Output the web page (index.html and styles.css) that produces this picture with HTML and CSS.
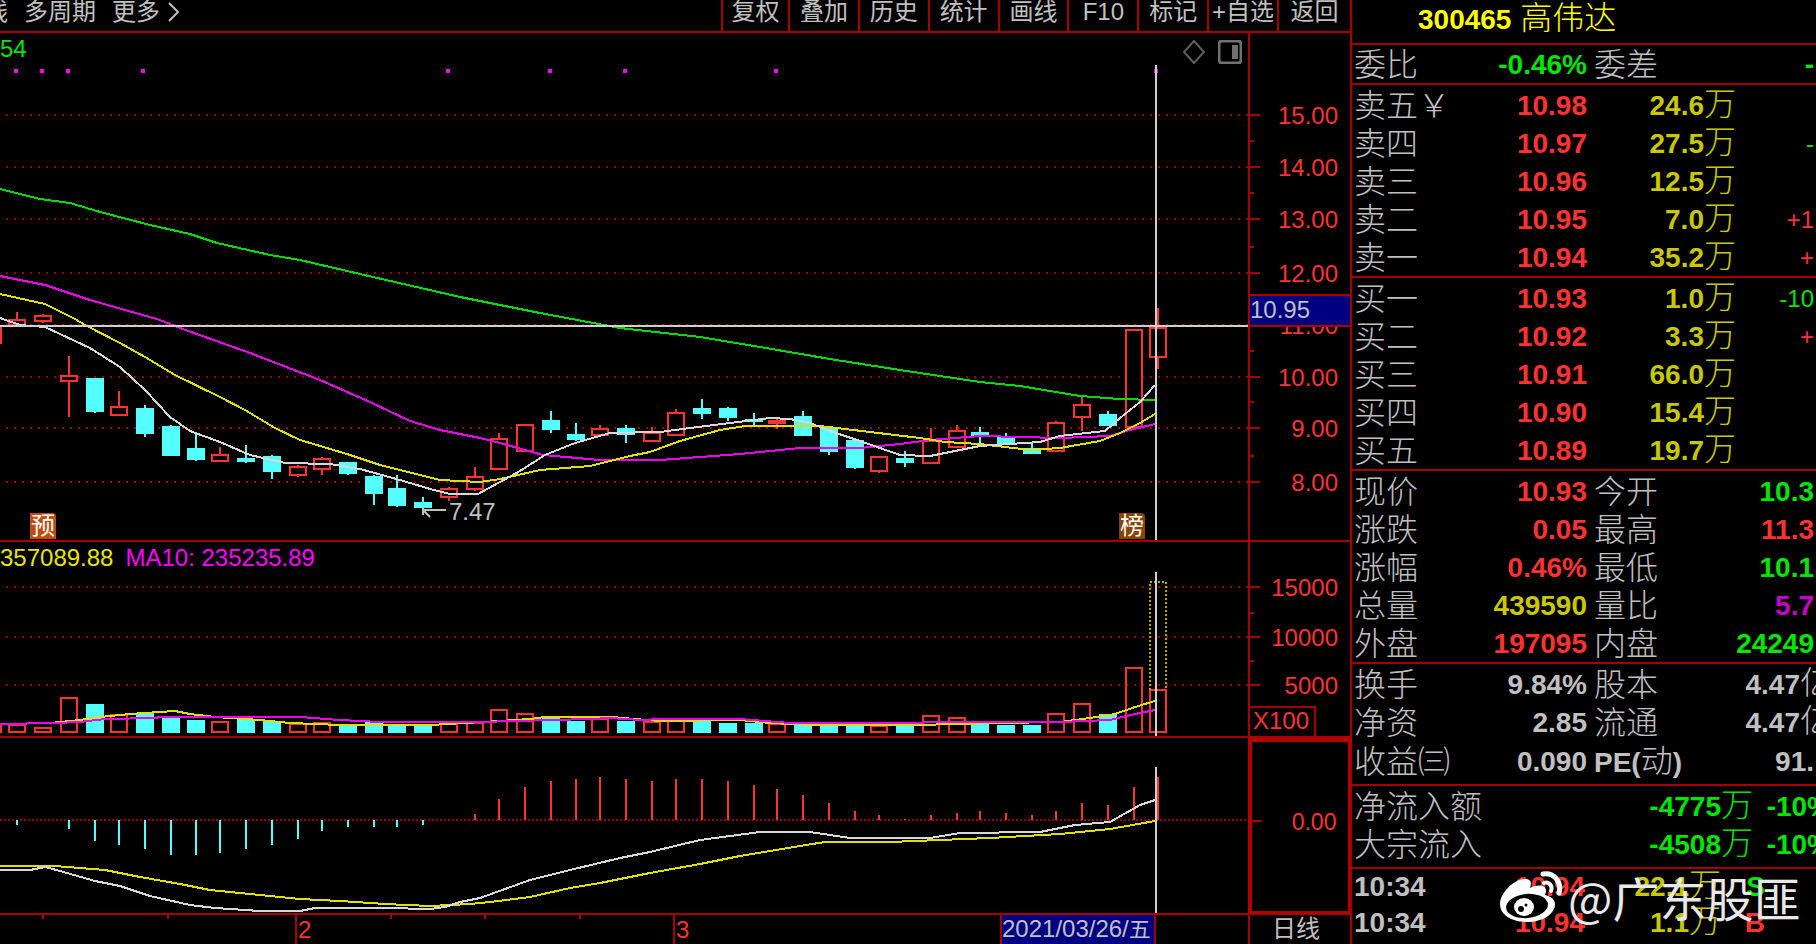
FILE: index.html
```html
<!DOCTYPE html>
<html lang="zh-CN">
<head>
<meta charset="utf-8">
<title>300465 高伟达</title>
<link rel="stylesheet" href="styles.css">
</head>
<body>
<div class="terminal">
  <main class="board">
    <header class="toolbar">
      <nav class="periods">
        <button class="period">线</button>
        <button class="period">多周期</button>
        <button class="period more">更多<svg class="chevron" viewBox="0 0 12 20"><path d="M1 1L10 10L1 19"/></svg></button>
      </nav>
      <nav class="tools">
        <button class="tool">复权</button>
        <button class="tool">叠加</button>
        <button class="tool">历史</button>
        <button class="tool">统计</button>
        <button class="tool">画线</button>
        <button class="tool">F10</button>
        <button class="tool">标记</button>
        <button class="tool">+自选</button>
        <button class="tool">返回</button>
      </nav>
    </header>

    <section class="panel">
      <div class="plot">
        <svg id="price" class="canvas" viewBox="0 33 1248 507" preserveAspectRatio="none"></svg>
        <div class="legend"><span class="green">54</span></div>
        <div class="plot-icons">
          <svg class="icon" viewBox="0 0 24 24"><path d="M12 1L22 12L12 23L2 12Z"/></svg>
          <svg class="icon thick" viewBox="0 0 24 24"><rect x="1" y="1" width="22" height="22" rx="3"/><rect class="solid" x="14" y="5" width="6" height="14"/></svg>
        </div>
        <span class="badge notice">预</span>
        <span class="badge rank">榜</span>
        <span class="low"><svg class="arrow" viewBox="0 0 24 14"><path d="M1 5H24M1 2V10M1 5L8 12"/></svg>7.47</span>
      </div>
      <svg id="price-axis" class="axis" viewBox="1250 33 100 507"></svg>
    </section>

    <section class="panel">
      <div class="plot">
        <svg id="volume" class="canvas" viewBox="0 542 1248 194" preserveAspectRatio="none"></svg>
        <div class="legend"><span class="yellow">357089.88</span><span class="magenta">MA10: 235235.89</span></div>
      </div>
      <svg id="volume-axis" class="axis" viewBox="1250 542 100 194"></svg>
    </section>

    <section class="panel">
      <div class="plot">
        <svg id="macd" class="canvas" viewBox="0 738 1248 175" preserveAspectRatio="none"></svg>
      </div>
      <svg id="macd-axis" class="axis active" viewBox="1250 738 100 175"></svg>
    </section>

    <footer class="dates">
      <div class="plot">
        <svg id="dates" class="canvas" viewBox="0 915 1248 29" preserveAspectRatio="none"></svg>
        <span class="month feb">2</span>
        <span class="month mar">3</span>
        <time class="today" datetime="2021-03-26">2021/03/26/<span class="day">五</span></time>
      </div>
      <div class="cycle">日线</div>
    </footer>
  </main>

  <aside class="quote">
    <h1 class="name"><b>300465</b> 高伟达</h1>

    <table class="block pair ratio">
      <tr><th>委比</th><td class="green">-0.46%</td><th>委差</th><td class="green">-</td></tr>
    </table>

    <table class="block depth">
      <tr><th>卖五￥</th><td class="red">10.98</td><td class="gold">24.6<i>万</i></td><td></td></tr>
      <tr><th>卖四</th><td class="red">10.97</td><td class="gold">27.5<i>万</i></td><td class="delta green">-</td></tr>
      <tr><th>卖三</th><td class="red">10.96</td><td class="gold">12.5<i>万</i></td><td></td></tr>
      <tr><th>卖二</th><td class="red">10.95</td><td class="gold">7.0<i>万</i></td><td class="delta red">+1</td></tr>
      <tr><th>卖一</th><td class="red">10.94</td><td class="gold">35.2<i>万</i></td><td class="delta red">+</td></tr>
    </table>

    <table class="block depth">
      <tr><th>买一</th><td class="red">10.93</td><td class="gold">1.0<i>万</i></td><td class="delta green">-10</td></tr>
      <tr><th>买二</th><td class="red">10.92</td><td class="gold">3.3<i>万</i></td><td class="delta red">+</td></tr>
      <tr><th>买三</th><td class="red">10.91</td><td class="gold">66.0<i>万</i></td><td></td></tr>
      <tr><th>买四</th><td class="red">10.90</td><td class="gold">15.4<i>万</i></td><td></td></tr>
      <tr><th>买五</th><td class="red">10.89</td><td class="gold">19.7<i>万</i></td><td></td></tr>
    </table>

    <table class="block pair">
      <tr><th>现价</th><td class="red">10.93</td><th>今开</th><td class="green">10.3</td></tr>
      <tr><th>涨跌</th><td class="red">0.05</td><th>最高</th><td class="red">11.3</td></tr>
      <tr><th>涨幅</th><td class="red">0.46%</td><th>最低</th><td class="green">10.1</td></tr>
      <tr><th>总量</th><td class="gold">439590</td><th>量比</th><td class="purple">5.7</td></tr>
      <tr><th>外盘</th><td class="red">197095</td><th>内盘</th><td class="green">24249</td></tr>
    </table>

    <table class="block pair roomy">
      <tr><th>换手</th><td>9.84%</td><th>股本</th><td><span class="bleed">4.47<i>亿</i></span></td></tr>
      <tr><th>净资</th><td>2.85</td><th>流通</th><td><span class="bleed">4.47<i>亿</i></span></td></tr>
      <tr><th>收益㈢</th><td>0.090</td><th><b>PE(</b>动<b>)</b></th><td>91.</td></tr>
    </table>

    <table class="block flow">
      <tr><th>净流入额</th><td class="green">-4775<i>万</i></td><td class="green"><span class="bleed">-10%</span></td></tr>
      <tr><th>大宗流入</th><td class="green">-4508<i>万</i></td><td class="green"><span class="bleed">-10%</span></td></tr>
    </table>

    <table class="block ticks">
      <tr><td>10:34</td><td class="red">10.94</td><td class="gold">22.1<i>万</i></td><td class="green">S</td></tr>
      <tr><td>10:34</td><td class="red">10.94</td><td class="gold">1.1<i>万</i></td><td class="red">B</td></tr>
    </table>

    <div class="watermark">
      <svg class="weibo" viewBox="0 0 63 52">
        <path class="w" d="M0 33C0 22 14 8 25 8C31 8 32 12 30 17C38 13 46 14 46 20C46 22 45 23 45 24C50 25 55 28 55 33C55 43 43 51 27 51C12 51 0 44 0 33Z"/>
        <ellipse class="k" cx="27" cy="35" rx="21" ry="12" transform="rotate(-6 27 35)"/>
        <ellipse class="w" cx="24" cy="36" rx="10" ry="9"/>
        <circle class="k" cx="21" cy="38" r="3"/>
        <circle class="k" cx="26" cy="34" r="1.5"/>
        <path class="arc" d="M43 3C54 1 62 11 59 22"/>
        <path class="arc inner" d="M44 12C49 10 53 15 51 20"/>
      </svg>
      <span>@广东股匪</span>
    </div>
  </aside>
</div>
<script src="chart.js"></script>
</body>
</html>
```

FILE: styles.css
```css
* { box-sizing: border-box; }

:root {
  --line: #a80000;
  --red: #ff3232;
  --cyan: #54ffff;
  --grey: #c0c0c0;
}

body {
  margin: 0;
  background: #000;
  color: var(--grey);
  font-family: "Liberation Sans", "Noto Sans CJK SC", sans-serif;
  font-size: 24px;
  line-height: 24px;
}

.terminal {
  display: grid;
  grid-template-columns: minmax(0, 1fr) 466px;
  height: 100vh;
  overflow: hidden;
}

.board {
  display: grid;
  grid-template-rows: 33px 509fr 196fr 177fr 29px;
  min-height: 0;
}

.green { color: #00e600; }
.red { color: var(--red); }
.yellow { color: #e6e600; }
.gold { color: #c8c800; }
.magenta { color: #f0f; }
.purple { color: #c800c8; }

/* toolbar */
.toolbar {
  display: flex;
  justify-content: space-between;
  border-bottom: 2px solid var(--line);
  overflow: hidden;
}

button {
  border: 0;
  padding: 0;
  background: none;
  color: inherit;
  font: inherit;
  white-space: nowrap;
}

.periods {
  display: flex;
  gap: 16px;
  margin-left: -16px;
  padding-bottom: 8px;
}

.more {
  display: flex;
  align-items: center;
  gap: 8px;
}

.chevron {
  width: 12px;
  height: 20px;
  fill: none;
  stroke: var(--grey);
  stroke-width: 2;
}

.tools {
  display: grid;
  grid-template-columns: 67px repeat(7, 1fr) 73px;
  width: 629px;
}

.tool {
  min-width: 0;
  padding-bottom: 8px;
  border-left: 2px solid var(--line);
}

/* chart panels */
.panel, .dates {
  display: grid;
  grid-template-columns: minmax(0, 1fr) 102px;
  min-height: 0;
}

.panel { border-bottom: 2px solid var(--line); }

.plot {
  position: relative;
  min-height: 0;
  overflow: hidden;
}

.canvas {
  position: absolute;
  inset: 0;
  width: 100%;
  height: 100%;
  shape-rendering: crispEdges;
}

.axis {
  width: 102px;
  height: 100%;
  border-left: 2px solid var(--line);
}

.active {
  border: 4px solid #b40000;
  border-right-width: 2px;
  border-bottom-width: 2px;
}

.legend {
  position: relative;
  display: flex;
  gap: 12px;
  padding-top: 4px;
}

.plot-icons {
  position: absolute;
  top: 7px;
  right: 6px;
  display: flex;
  gap: 12px;
}

.icon {
  width: 24px;
  height: 24px;
  fill: none;
  stroke: #606060;
  stroke-width: 2;
}

.thick { stroke: #707070; stroke-width: 3; }
.solid { fill: #707070; stroke: none; }

.badge {
  position: absolute;
  bottom: 1px;
  width: 26px;
  height: 26px;
  border-radius: 0 4px 0 0;
  color: #fff;
  line-height: 25px;
  text-align: center;
}

.notice { left: 30px; background: #c04c10; }
.rank { right: 103px; background: #8a4400; }

.low {
  position: absolute;
  left: 422px;
  bottom: 16px;
  display: flex;
  align-items: center;
  gap: 3px;
}

.arrow {
  width: 24px;
  height: 14px;
  fill: none;
  stroke: var(--grey);
  stroke-width: 2;
}

.grid { stroke: #a00000; stroke-width: 2; fill: none; stroke-dasharray: 2 6; }
.grid-fine { stroke: #a00000; stroke-width: 2; fill: none; stroke-dasharray: 2 2; }
.up { fill: #000; stroke: var(--red); stroke-width: 2; }
.hollow { fill: none; }
.down { fill: var(--cyan); stroke: none; }
.wick-up { stroke: var(--red); stroke-width: 2; }
.wick-down { stroke: var(--cyan); stroke-width: 2; }
.ma { fill: none; stroke-width: 2; }
.m-white { stroke: #d8d8d8; }
.m-yellow { stroke: #e0e000; }
.m-magenta { stroke: #f000f0; }
.m-green { stroke: #00dc00; }
.cross { stroke: #d0d0d0; stroke-width: 2; }
.dot { fill: #f0f; }
.forecast { fill: none; stroke: #b0b000; stroke-width: 2; stroke-dasharray: 2 2; }
.tick { stroke: var(--line); stroke-width: 2; fill: none; shape-rendering: crispEdges; }
.scale { fill: var(--red); font-size: 24px; text-anchor: end; }
.left { text-anchor: start; }
.cursor { fill: #000080; }
.cursor-text { fill: var(--grey); font-size: 24px; }

/* date strip */
.month {
  position: absolute;
  top: 3px;
  color: var(--red);
}

.feb { left: 298px; }
.mar { left: 676px; }

.today {
  position: absolute;
  top: 0;
  bottom: 0;
  right: 92px;
  width: 156px;
  padding-top: 2px;
  border: solid var(--line);
  border-width: 0 2px;
  background: #000080;
  white-space: nowrap;
}

.day { font-size: 22px; }

.cycle {
  padding: 2px 0 0 22px;
  border-left: 2px solid var(--line);
}

/* quote panel */
.quote {
  position: relative;
  border-left: 2px solid var(--line);
  overflow: hidden;
}

.name {
  height: 45px;
  margin: 0;
  padding-left: 66px;
  border-bottom: 2px solid var(--line);
  color: #ff0;
  font-size: 32px;
  font-weight: 300;
  line-height: 36px;
  white-space: nowrap;
}

b { font-size: 28px; font-weight: 700; }

.block {
  display: block;
  padding-top: 1px;
  border-bottom: 2px solid var(--line);
  border-spacing: 0;
}

.block tbody { display: block; }
.block tr { display: grid; height: 38px; align-items: center; }
.pair tr { grid-template-columns: 98px 137px 98px minmax(0, 1fr); }
.depth tr { grid-template-columns: 98px 137px 149px minmax(0, 1fr); }
.flow tr { grid-template-columns: 141px 260px minmax(0, 1fr); }
.ticks tr { grid-template-columns: 98px 135px 136px 46px; height: 36px; }
.ratio { padding-top: 0; }
.roomy { padding-bottom: 5px; }
.flow { padding-bottom: 4px; }
.ticks { padding-top: 0; border: 0; }

th, td {
  padding: 2px 0 0;
  line-height: 36px;
  white-space: nowrap;
}

th {
  padding-left: 2px;
  font-size: 32px;
  font-weight: 300;
  text-align: left;
}

.pair th:nth-child(3) { padding-left: 7px; }

td {
  font-size: 28px;
  font-weight: 700;
  text-align: right;
}

td:last-child { padding-right: 2px; }
.ticks td { padding-top: 0; }
.ticks td:first-child { padding-left: 2px; text-align: left; }
td i { font-size: 32px; font-style: normal; font-weight: 300; line-height: 30px; }
.delta { font-size: 24px; font-weight: 400; }
.bleed { margin-right: -18px; }

.watermark {
  position: absolute;
  left: 148px;
  bottom: 21px;
  display: flex;
  align-items: center;
  gap: 5px;
  color: #e8e8e8;
  font-family: "Noto Sans CJK SC", sans-serif;
  font-size: 47px;
  line-height: 52px;
  white-space: nowrap;
}

.weibo { width: 63px; height: 52px; }
.w { fill: #fff; }
.k { fill: #000; }
.arc { fill: none; stroke: #fff; stroke-width: 5; stroke-linecap: round; }
.inner { stroke-width: 4; }
```

FILE: chart.js
```js
const NS = "http://www.w3.org/2000/svg";

function add(id, tag, cls, attrs, text) {
  const el = document.createElementNS(NS, tag);
  el.setAttribute("class", cls);
  for (const k in attrs) el.setAttribute(k, attrs[k]);
  if (text) el.textContent = text;
  document.getElementById(id).appendChild(el);
}
const line = (id, cls, x1, y1, x2, y2) => add(id, "line", cls, { x1, y1, x2, y2 });
const path = (id, cls, points) => add(id, "polyline", "ma " + cls, { points });

// x, direction, high, body top, body bottom, low, volume top, macd end
const days = [
  [-7, 1, 327, 327, 343, 343, 725, 820],
  [17, 1, 312, 320, 325, 325, 725, 825],
  [43, 1, 314, 316, 321, 323, 728, 820],
  [69, 1, 356, 376, 381, 417, 698, 829],
  [95, 0, 379, 379, 411, 413, 704, 841],
  [119, 1, 391, 407, 415, 415, 715, 845],
  [145, 0, 405, 409, 433, 437, 713, 849],
  [171, 0, 425, 427, 455, 455, 717, 855],
  [196, 0, 434, 449, 459, 461, 720, 855],
  [220, 1, 447, 455, 461, 461, 722, 853],
  [246, 0, 445, 459, 461, 463, 719, 849],
  [272, 0, 455, 457, 471, 479, 721, 845],
  [298, 1, 465, 467, 475, 477, 724, 839],
  [322, 1, 457, 459, 469, 475, 723, 831],
  [348, 0, 463, 463, 473, 475, 725, 827],
  [374, 0, 475, 477, 493, 505, 721, 827],
  [397, 0, 475, 489, 505, 507, 725, 827],
  [423, 0, 497, 503, 507, 507, 725, 825],
  [449, 1, 487, 489, 497, 501, 723, 820],
  [475, 1, 467, 477, 489, 491, 723, 814],
  [499, 1, 433, 439, 469, 469, 710, 799],
  [525, 1, 425, 425, 451, 451, 714, 787],
  [551, 0, 411, 421, 429, 433, 717, 781],
  [576, 0, 423, 435, 439, 441, 721, 779],
  [600, 1, 425, 429, 435, 435, 719, 777],
  [626, 0, 425, 429, 434, 443, 721, 779],
  [652, 1, 427, 433, 441, 441, 722, 781],
  [676, 1, 409, 413, 435, 435, 721, 779],
  [702, 0, 399, 409, 413, 419, 721, 779],
  [728, 0, 407, 409, 417, 421, 723, 781],
  [754, 0, 413, 420, 421, 425, 723, 785],
  [777, 1, 418, 421, 423, 429, 724, 789],
  [803, 0, 411, 417, 435, 435, 723, 795],
  [829, 0, 427, 429, 451, 455, 725, 803],
  [855, 0, 439, 441, 467, 469, 725, 811],
  [879, 1, 457, 457, 471, 473, 726, 815],
  [905, 0, 451, 459, 462, 467, 725, 819],
  [931, 1, 428, 441, 463, 463, 716, 815],
  [957, 1, 425, 431, 447, 447, 718, 813],
  [980, 0, 427, 433, 435, 444, 723, 811],
  [1006, 0, 433, 437, 444, 444, 725, 813],
  [1032, 0, 442, 449, 453, 453, 725, 815],
  [1056, 1, 421, 423, 451, 451, 714, 811],
  [1082, 1, 397, 405, 417, 431, 704, 803],
  [1108, 0, 411, 415, 425, 425, 714, 805],
  [1134, 1, 330, 330, 427, 427, 668, 787],
  [1158, 1, 308, 328, 357, 369, 690, 777]
];

[115, 167, 219, 273, 325, 377, 428, 482].forEach(y => line("price", "grid", 6, y, 1248, y));
[587, 637, 685].forEach(y => line("volume", "grid", 6, y, 1248, y));
line("macd", "grid-fine", 0, 820, 1248, 820);

const bar = (id, up, x, top, bottom, cls) => up
  ? add(id, "rect", "up " + cls, { x: x - 8, y: top, width: 16, height: Math.max(bottom - top, 1) })
  : add(id, "rect", "down", { x: x - 9, y: top - 1, width: 18, height: bottom - top + 2 });

days.forEach(([x, up, high, top, bottom, low, vol, macd]) => {
  const wick = up ? "wick-up" : "wick-down";
  line("price", wick, x, high, x, top);
  line("price", wick, x, bottom, x, low);
  bar("price", up, x, top, bottom, "");
  bar("volume", up, x, vol - (up ? 0 : -1), 732, "hollow");
  if (macd !== 820) line("macd", macd < 820 ? "wick-up" : "wick-down", x, 820, x, macd);
});

[16, 42, 68, 143, 448, 550, 625, 776, 1156].forEach(x =>
  add("price", "rect", "dot", { x: x - 2, y: 69, width: 4, height: 4 }));

path("price", "m-green", "0,189 40,199 70,203 100,212 150,225 190,234 217,243 270,255 300,260 360,274 460,297 540,313 620,328 700,337 760,347 836,360 900,370 940,376 980,382 1020,386 1080,396 1120,399 1155,400");
path("price", "m-magenta", "0,276 45,285 90,300 160,320 180,328 250,353 320,380 370,402 410,421 440,430 480,438 500,443 543,455 600,460 660,460 740,454 800,448 860,448 900,444 930,440 980,436 1060,438 1110,436 1130,430 1155,424");
path("price", "m-yellow", "0,294 45,304 75,319 85,325 120,343 145,357 175,375 220,397 245,410 275,428 300,440 350,455 380,465 440,480 480,482 500,479 540,470 590,466 630,456 650,452 680,441 720,430 745,426 820,426 845,429 920,438 945,442 980,444 1030,450 1060,448 1100,441 1120,433 1140,423 1155,414");
path("price", "m-white", "0,318 20,325 45,327 90,348 120,367 145,390 170,417 190,431 220,442 250,455 285,463 330,464 360,469 400,480 430,489 450,494 478,494 500,482 520,471 545,455 575,443 610,433 660,432 690,428 730,423 770,418 790,419 810,423 830,431 860,441 900,455 930,456 960,450 980,446 1040,442 1060,436 1105,431 1120,418 1140,402 1155,385");

path("volume", "m-yellow", "50,723 80,720 100,717 130,714 160,712 175,711 190,714 215,717 260,720 290,723 340,725 430,725 482,722 500,721 530,719 545,717 612,717 635,719 660,721 740,720 770,723 815,725 915,725 1000,723 1060,722 1090,718 1115,714 1135,707 1155,701");
path("volume", "m-magenta", "0,724 55,723 80,722 105,719 155,718 160,717 300,717 340,720 380,722 480,722 515,721 590,719 610,718 640,720 663,719 740,719 790,723 1060,722 1110,720 1135,714 1155,710");
add("volume", "path", "forecast", { d: "M1150 690V582H1166V690" });

path("macd", "m-yellow", "0,866 55,866 80,868 105,870 140,877 180,884 210,890 260,895 300,899 340,901 385,904 430,906 470,904 490,902 530,897 570,888 600,883 650,873 700,864 740,856 800,846 825,842 890,842 940,840 990,838 1060,834 1110,829 1155,821");
path("macd", "m-white", "0,870 30,870 45,867 60,871 95,881 120,886 150,896 190,905 215,908 260,911 300,911 315,908 385,908 430,909 445,907 460,902 480,898 530,880 570,870 620,858 650,852 700,840 760,832 810,832 850,838 890,838 930,838 960,833 1040,832 1075,825 1110,822 1140,805 1155,800");

line("price", "cross", 0, 326, 1248, 326);
line("price", "cross", 1156, 65, 1156, 540);
line("volume", "cross", 1156, 572, 1156, 736);
line("macd", "cross", 1156, 767, 1156, 913);

function scale(id, labels, minor) {
  labels.forEach(([y, text]) => {
    line(id, "tick", 1250, y, 1260, y);
    add(id, "text", "scale", { x: 1338, y: y + 9 }, text);
  });
  minor.forEach(y => line(id, "tick", 1250, y, 1254, y));
}
scale("price-axis", [[115, "15.00"], [167, "14.00"], [219, "13.00"], [273, "12.00"], [325, "11.00"], [377, "10.00"], [428, "9.00"], [482, "8.00"]], [141, 193, 247, 351, 402, 456]);
add("price-axis", "rect", "cursor", { x: 1250, y: 295, width: 100, height: 31 });
line("price-axis", "tick", 1250, 295, 1350, 295);
line("price-axis", "tick", 1250, 326, 1350, 326);
add("price-axis", "text", "cursor-text", { x: 1250, y: 318 }, "10.95");

scale("volume-axis", [[587, "15000"], [637, "10000"], [685, "5000"]], [613, 661]);
add("volume-axis", "path", "tick", { d: "M1250 707H1315V736" });
add("volume-axis", "text", "scale left", { x: 1253, y: 729 }, "X100");

scale("macd-axis", [[820, "0.00"]], []);

[43, 168, 391, 485, 580].forEach(x => line("dates", "tick", x, 915, x, 919));
[296, 674].forEach(x => line("dates", "tick", x, 915, x, 944));
```
